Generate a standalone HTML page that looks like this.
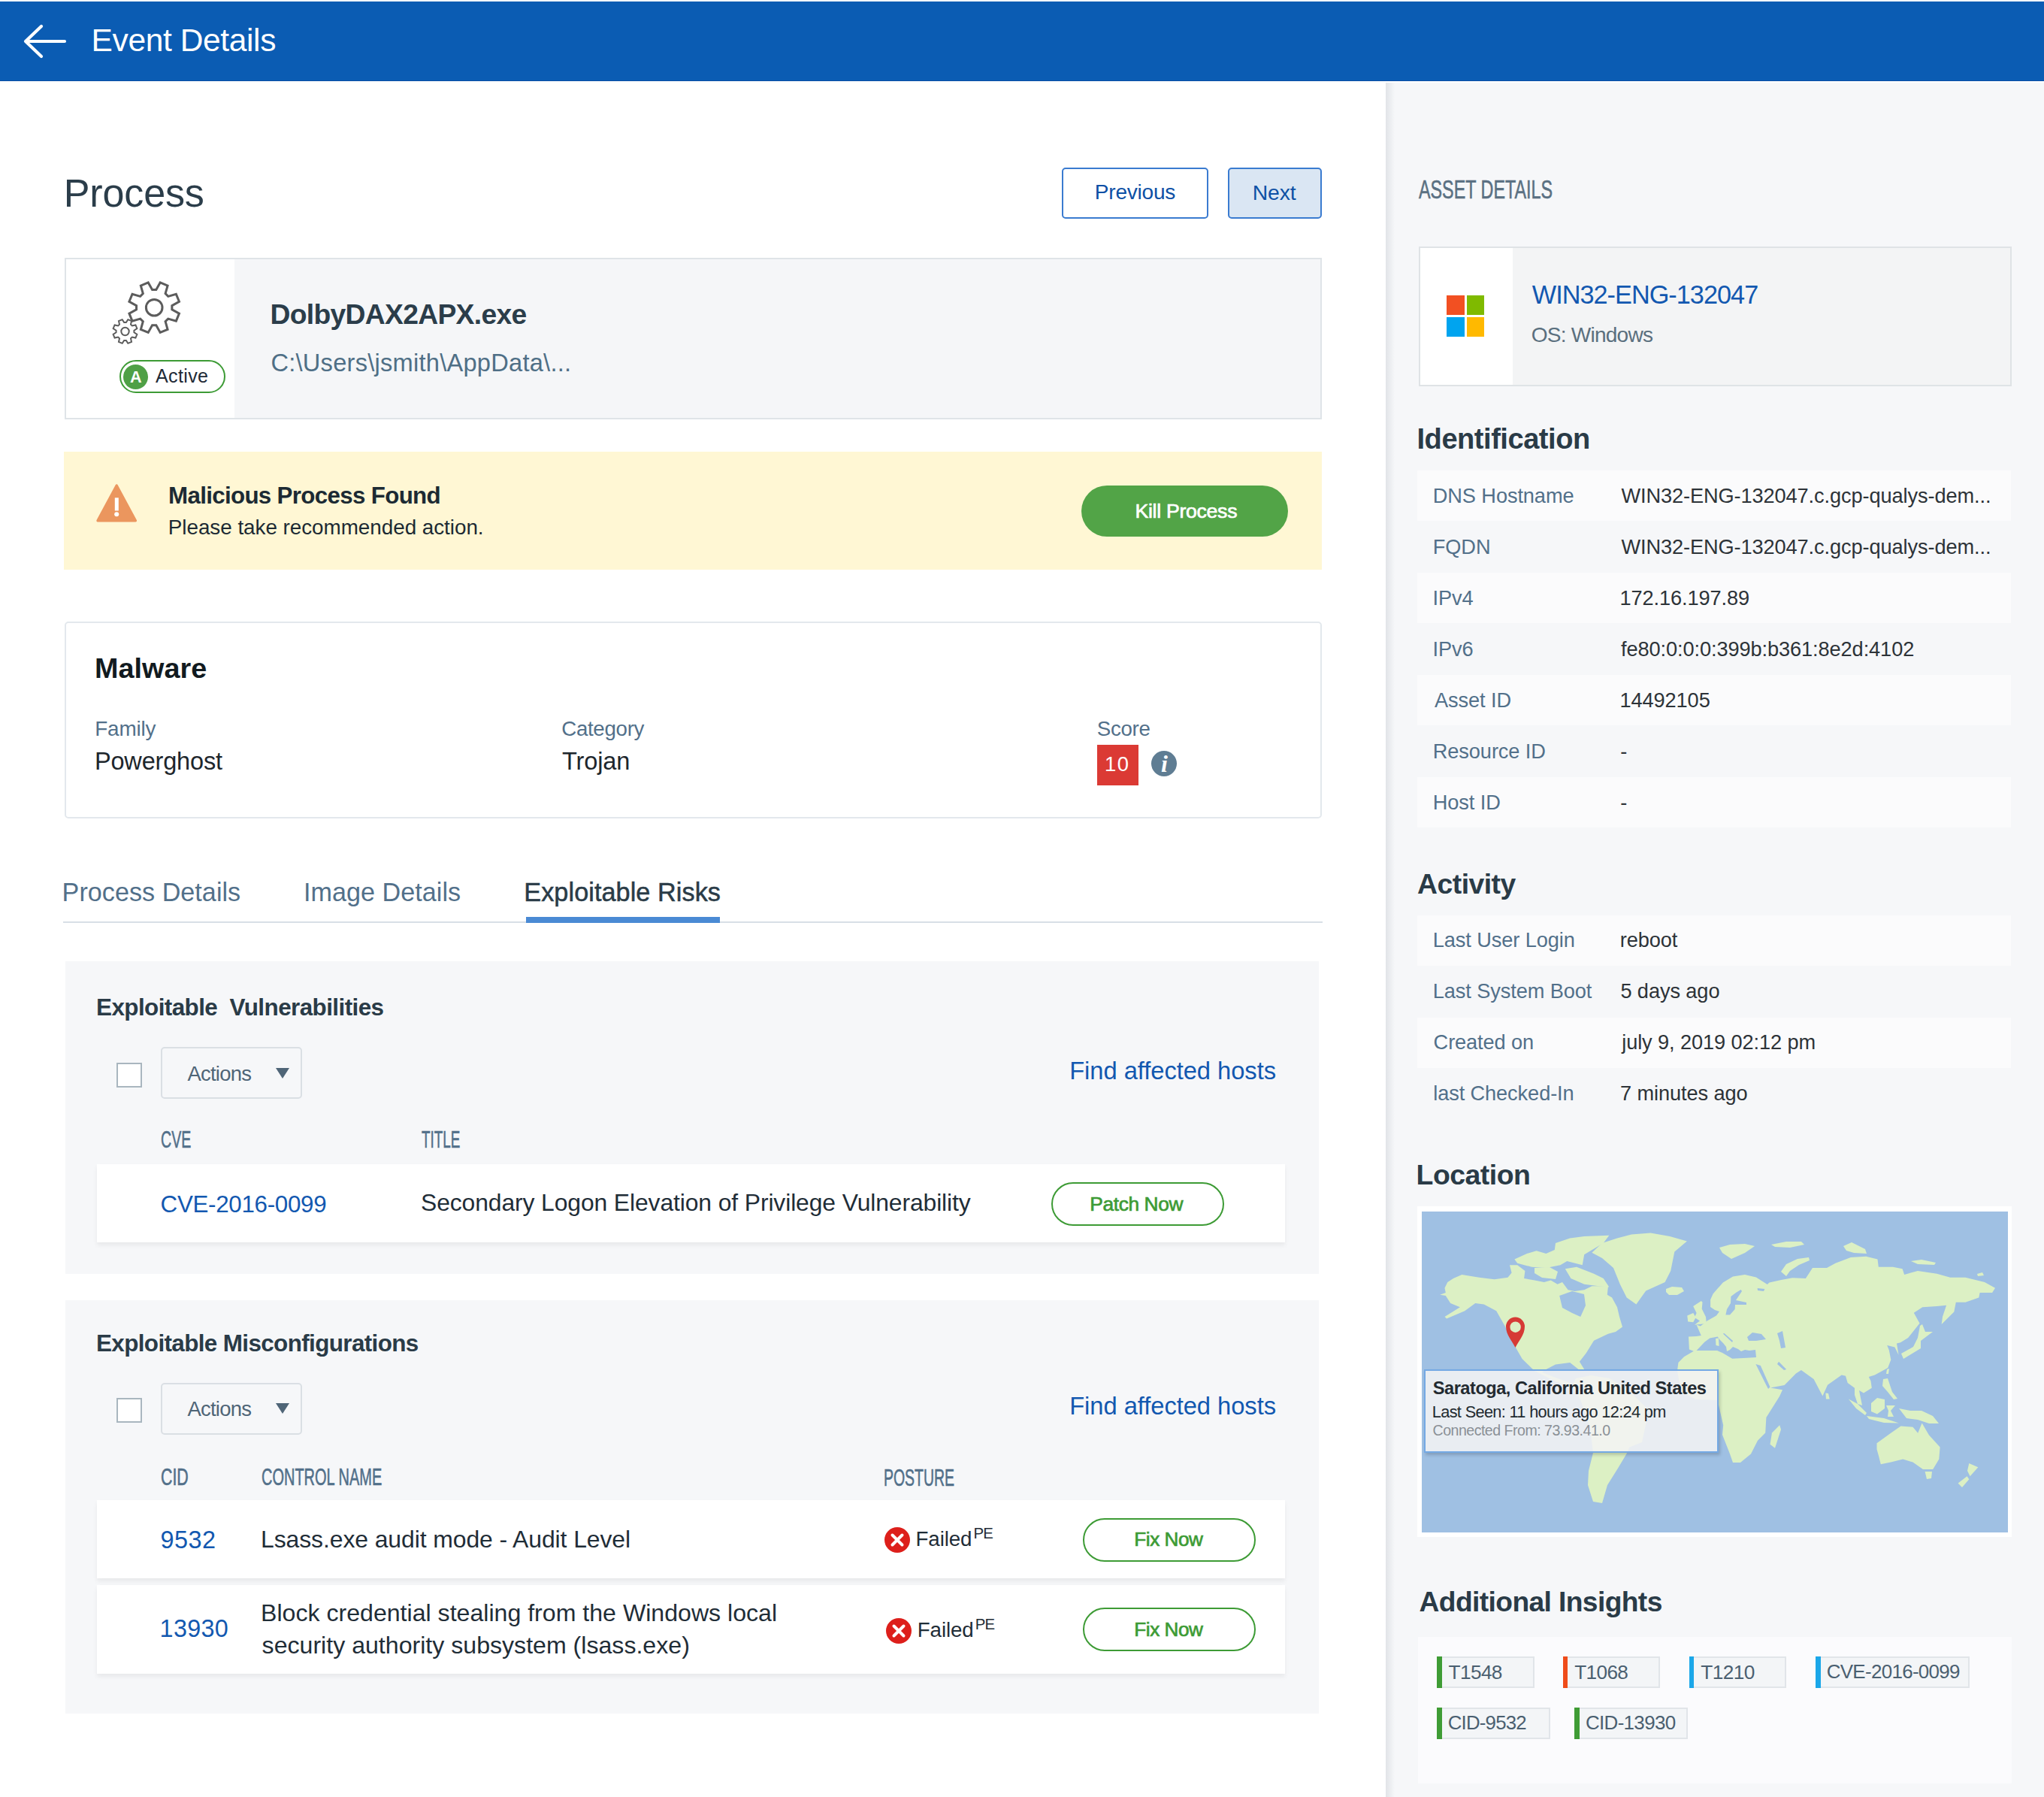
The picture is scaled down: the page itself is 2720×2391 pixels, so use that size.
<!DOCTYPE html>
<html><head><meta charset="utf-8"><title>Event Details</title>
<style>
html,body{margin:0;padding:0;}
body{width:2720px;height:2391px;position:relative;overflow:hidden;background:#fff;font-family:"Liberation Sans",sans-serif;}
.t{position:absolute;white-space:pre;line-height:1;}
.r{position:absolute;}
</style></head><body>
<div class="r" style="left:0.0px;top:1.8px;width:2720.0px;height:106.2px;background:#0b5cb3;border-bottom:1.5px solid #0a4ea6;box-sizing:border-box;"></div>
<svg class="r" style="left:0;top:0" width="140" height="108"><path d="M86,55 L34,55 M55,35 L34,55 L55,75" stroke="#fff" stroke-width="4.2" fill="none" stroke-linecap="round" stroke-linejoin="round"/></svg>
<div class="t" style="left:121.6px;top:32.5px;font-size:42.51px;font-weight:400;color:#ffffff;letter-spacing:-0.38px;">Event Details</div>
<div class="r" style="left:1844.0px;top:110.0px;width:876.0px;height:2281.0px;background:#f6f7f9;"></div>
<div class="r" style="left:1844.0px;top:110.0px;width:12.0px;height:2281.0px;background:linear-gradient(to right, rgba(40,60,80,0.10), rgba(40,60,80,0));"></div>
<div class="t" style="left:84.8px;top:230.9px;font-size:52.08px;font-weight:400;color:#2b3d4a;letter-spacing:-0.17px;">Process</div>
<div class="r" style="left:1413.0px;top:223.0px;width:195.0px;height:68.0px;border:2px solid #3a7bd0;border-radius:5px;background:#fff;box-sizing:border-box;"></div>
<div class="t" style="left:1456.8px;top:242.4px;font-size:28.06px;font-weight:400;color:#0d50a5;letter-spacing:-0.23px;">Previous</div>
<div class="r" style="left:1634.0px;top:223.0px;width:125.0px;height:68.0px;border:2px solid #3a7bd0;border-radius:5px;background:#dae6f3;box-sizing:border-box;"></div>
<div class="t" style="left:1666.7px;top:242.2px;font-size:28.36px;font-weight:400;color:#0d50a5;letter-spacing:-0.09px;">Next</div>
<div class="r" style="left:86.0px;top:343.0px;width:1673.0px;height:215.0px;border:2px solid #dfe4e8;background:#f5f6f8;box-sizing:border-box;"></div>
<div class="r" style="left:88.0px;top:345.0px;width:224.0px;height:211.0px;background:#fff;"></div>
<svg class="r" style="left:0;top:0" width="320" height="560"><path d="M213.18,375.94 L223.07,380.04 L220.08,390.63 L223.77,394.32 L234.36,391.33 L238.46,401.22 L228.86,406.59 L228.86,411.81 L238.46,417.18 L234.36,427.07 L223.77,424.08 L220.08,427.77 L223.07,438.36 L213.18,442.46 L207.81,432.86 L202.59,432.86 L197.22,442.46 L187.33,438.36 L190.32,427.77 L186.63,424.08 L176.04,427.07 L171.94,417.18 L181.54,411.81 L181.54,406.59 L171.94,401.22 L176.04,391.33 L186.63,394.32 L190.32,390.63 L187.33,380.04 L197.22,375.94 L202.59,385.54 L207.81,385.54 Z" stroke="#5c5c5c" stroke-width="3" fill="none" stroke-linejoin="miter"/><circle cx="205.2" cy="409.2" r="10.8" stroke="#5c5c5c" stroke-width="3" fill="none"/><path d="M170.31,425.15 L175.02,427.10 L174.00,431.63 L175.87,433.50 L180.40,432.48 L182.35,437.19 L178.43,439.68 L178.43,442.32 L182.35,444.81 L180.40,449.52 L175.87,448.50 L174.00,450.37 L175.02,454.90 L170.31,456.85 L167.82,452.93 L165.18,452.93 L162.69,456.85 L157.98,454.90 L159.00,450.37 L157.13,448.50 L152.60,449.52 L150.65,444.81 L154.57,442.32 L154.57,439.68 L150.65,437.19 L152.60,432.48 L157.13,433.50 L159.00,431.63 L157.98,427.10 L162.69,425.15 L165.18,429.07 L167.82,429.07 Z" stroke="#5c5c5c" stroke-width="2" fill="#fff"/><circle cx="166.5" cy="441" r="5.2" stroke="#5c5c5c" stroke-width="2" fill="none"/></svg>
<div class="r" style="left:159.0px;top:479.0px;width:141.0px;height:44.0px;border:2.5px solid #3d9b35;border-radius:22px;background:#fff;box-sizing:border-box;"></div>
<div class="r" style="left:163.5px;top:484.5px;width:33px;height:33px;border-radius:50%;background:#4fa046;"></div>
<div class="t" style="left:173.0px;top:490.7px;font-size:21.65px;font-weight:700;color:#fff;">A</div>
<div class="t" style="left:207.0px;top:488.3px;font-size:25.09px;font-weight:400;color:#1e2a36;letter-spacing:0.35px;">Active</div>
<div class="t" style="left:359.6px;top:400.4px;font-size:37.28px;font-weight:700;color:#2b3d4a;letter-spacing:-0.70px;">DolbyDAX2APX.exe</div>
<div class="t" style="left:360.4px;top:467.4px;font-size:32.64px;font-weight:400;color:#4f6f86;letter-spacing:0.24px;">C:\Users\jsmith\AppData\...</div>
<div class="r" style="left:85.0px;top:601.0px;width:1674.0px;height:157.0px;background:#fff7d4;"></div>
<svg class="r" style="left:100px;top:620px" width="120" height="100"><path d="M55.2,26 L30,72.8 L80.4,72.8 Z" fill="#eb965e" stroke="#eb965e" stroke-width="3.4" stroke-linejoin="round"/><rect x="52.8" y="42.3" width="5" height="17.2" fill="#fff"/><circle cx="55.2" cy="64.2" r="3" fill="#fff"/></svg>
<div class="t" style="left:224.0px;top:643.5px;font-size:31.30px;font-weight:700;color:#1c2a33;letter-spacing:-0.67px;">Malicious Process Found</div>
<div class="t" style="left:223.8px;top:688.2px;font-size:27.85px;font-weight:400;color:#1c2a33;letter-spacing:-0.04px;">Please take recommended action.</div>
<div class="r" style="left:1439.0px;top:646.0px;width:275.0px;height:68.0px;background:#52a447;border-radius:34px;"></div>
<div class="t" style="left:1510.5px;top:666.8px;font-size:26.70px;font-weight:400;color:#fff;letter-spacing:-0.31px;-webkit-text-stroke:0.7px #fff;">Kill Process</div>
<div class="r" style="left:86.0px;top:827.0px;width:1673.0px;height:262.0px;border:2px solid #e3e8ed;border-radius:5px;background:#fff;box-sizing:border-box;"></div>
<div class="t" style="left:126.0px;top:871.0px;font-size:37.75px;font-weight:700;color:#111a20;letter-spacing:0.03px;">Malware</div>
<div class="t" style="left:126.3px;top:956.1px;font-size:27.86px;font-weight:400;color:#52708a;letter-spacing:-0.20px;">Family</div>
<div class="t" style="left:125.9px;top:997.0px;font-size:32.53px;font-weight:400;color:#1d262c;letter-spacing:-0.17px;">Powerghost</div>
<div class="t" style="left:747.2px;top:956.3px;font-size:27.70px;font-weight:400;color:#52708a;letter-spacing:-0.30px;">Category</div>
<div class="t" style="left:747.9px;top:996.9px;font-size:32.59px;font-weight:400;color:#1d262c;letter-spacing:-0.12px;">Trojan</div>
<div class="t" style="left:1459.8px;top:955.5px;font-size:27.71px;font-weight:400;color:#52708a;letter-spacing:-0.32px;">Score</div>
<div class="r" style="left:1460.0px;top:990.5px;width:55.0px;height:54.5px;background:#db3a34;"></div>
<div class="t" style="left:1469.9px;top:1003.3px;font-size:27.42px;font-weight:400;color:#fff;letter-spacing:1.58px;">10</div>
<svg class="r" style="left:1520px;top:990px" width="60" height="60"><circle cx="29" cy="26" r="17" fill="#5f7d93"/><text x="29.5" y="36.5" text-anchor="middle" font-family="Liberation Serif" font-style="italic" font-weight="700" font-size="32" fill="#fff">i</text></svg>
<div class="r" style="left:84.0px;top:1225.5px;width:1676.0px;height:2.0px;background:#d8dfe6;"></div>
<div class="t" style="left:82.6px;top:1170.0px;font-size:34.15px;font-weight:400;color:#52708a;letter-spacing:0.03px;">Process Details</div>
<div class="t" style="left:403.9px;top:1170.0px;font-size:34.15px;font-weight:400;color:#52708a;letter-spacing:0.04px;">Image Details</div>
<div class="t" style="left:697.3px;top:1169.9px;font-size:34.22px;font-weight:400;color:#2a3b47;letter-spacing:0.07px;-webkit-text-stroke:0.5px #2a3b47;">Exploitable Risks</div>
<div class="r" style="left:700.0px;top:1219.6px;width:258.0px;height:8.2px;background:#4a8ad4;"></div>
<div class="r" style="left:87.0px;top:1279.4px;width:1668.0px;height:416.1px;background:#f6f7f9;"></div>
<div class="t" style="left:128.0px;top:1325.4px;font-size:31.43px;font-weight:700;color:#2a3b47;letter-spacing:-0.58px;">Exploitable  Vulnerabilities</div>
<div class="r" style="left:155.0px;top:1414.0px;width:34.0px;height:33.0px;border:2px solid #a9b6bf;background:#fff;box-sizing:border-box;"></div>
<div class="r" style="left:214.0px;top:1393.4px;width:188.0px;height:69.0px;border:2px solid #dadfe4;border-radius:5px;box-sizing:border-box;"></div>
<div class="t" style="left:249.5px;top:1414.7px;font-size:27.48px;font-weight:400;color:#4f6577;letter-spacing:-0.78px;">Actions</div>
<svg class="r" style="left:360px;top:1415px" width="30" height="25"><path d="M7,6 L25,6 L16,20 Z" fill="#4f6577"/></svg>
<div class="t" style="left:1423.2px;top:1408.9px;font-size:32.71px;font-weight:400;color:#1258b0;letter-spacing:-0.05px;">Find affected hosts</div>
<div class="t" style="left:214.2px;top:1502.2px;font-size:30.73px;font-weight:400;color:#52708a;transform:scaleX(0.6377);transform-origin:0 0;-webkit-text-stroke:0.6px #52708a;">CVE</div>
<div class="t" style="left:561.0px;top:1502.2px;font-size:30.73px;font-weight:400;color:#52708a;transform:scaleX(0.6142);transform-origin:0 0;-webkit-text-stroke:0.6px #52708a;">TITLE</div>
<div class="r" style="left:129.3px;top:1549.0px;width:1581.0px;height:104.0px;background:#fff;box-shadow:0 4px 6px rgba(0,0,0,0.06);"></div>
<div class="t" style="left:213.6px;top:1586.7px;font-size:31.33px;font-weight:400;color:#1258b0;letter-spacing:-0.30px;">CVE-2016-0099</div>
<div class="t" style="left:560.0px;top:1584.6px;font-size:31.87px;font-weight:400;color:#1f2d37;letter-spacing:-0.11px;">Secondary Logon Elevation of Privilege Vulnerability</div>
<div class="r" style="left:1398.6px;top:1572.6px;width:230.3px;height:58.9px;border:2.5px solid #3d9b35;border-radius:30px;box-sizing:border-box;"></div>
<div class="t" style="left:1450.3px;top:1589.0px;font-size:26.31px;font-weight:400;color:#3d9b35;letter-spacing:-0.38px;-webkit-text-stroke:0.7px #3d9b35;">Patch Now</div>
<div class="r" style="left:87.0px;top:1730.0px;width:1668.0px;height:550.0px;background:#f6f7f9;"></div>
<div class="t" style="left:128.0px;top:1771.6px;font-size:31.43px;font-weight:700;color:#2a3b47;letter-spacing:-0.63px;">Exploitable Misconfigurations</div>
<div class="r" style="left:155.4px;top:1859.6px;width:33.6px;height:33.7px;border:2px solid #a9b6bf;background:#fff;box-sizing:border-box;"></div>
<div class="r" style="left:214.4px;top:1839.5px;width:187.3px;height:69.0px;border:2px solid #dadfe4;border-radius:5px;box-sizing:border-box;"></div>
<div class="t" style="left:249.5px;top:1860.7px;font-size:27.48px;font-weight:400;color:#4f6577;letter-spacing:-0.78px;">Actions</div>
<svg class="r" style="left:360px;top:1861px" width="30" height="25"><path d="M7,6 L25,6 L16,20 Z" fill="#4f6577"/></svg>
<div class="t" style="left:1423.2px;top:1854.9px;font-size:32.71px;font-weight:400;color:#1258b0;letter-spacing:-0.05px;">Find affected hosts</div>
<div class="t" style="left:213.9px;top:1950.7px;font-size:30.73px;font-weight:400;color:#52708a;transform:scaleX(0.6950);transform-origin:0 0;-webkit-text-stroke:0.6px #52708a;">CID</div>
<div class="t" style="left:347.8px;top:1950.7px;font-size:30.73px;font-weight:400;color:#52708a;transform:scaleX(0.6505);transform-origin:0 0;-webkit-text-stroke:0.6px #52708a;">CONTROL NAME</div>
<div class="t" style="left:1176.1px;top:1951.5px;font-size:30.73px;font-weight:400;color:#52708a;transform:scaleX(0.6336);transform-origin:0 0;-webkit-text-stroke:0.6px #52708a;">POSTURE</div>
<div class="r" style="left:129.3px;top:1996.0px;width:1581.0px;height:103.5px;background:#fff;box-shadow:0 4px 6px rgba(0,0,0,0.06);"></div>
<div class="r" style="left:129.3px;top:2108.5px;width:1581.0px;height:118.0px;background:#fff;box-shadow:0 4px 6px rgba(0,0,0,0.06);"></div>
<div class="t" style="left:213.5px;top:2032.7px;font-size:32.45px;font-weight:400;color:#1258b0;letter-spacing:0.43px;">9532</div>
<div class="t" style="left:347.0px;top:2033.0px;font-size:31.93px;font-weight:400;color:#1f2d37;letter-spacing:-0.09px;">Lsass.exe audit mode - Audit Level</div>
<div class="t" style="left:212.6px;top:2151.2px;font-size:32.33px;font-weight:400;color:#1258b0;letter-spacing:0.32px;">13930</div>
<div class="t" style="left:347.0px;top:2130.1px;font-size:32.12px;font-weight:400;color:#1f2d37;">Block credential stealing from the Windows local</div>
<div class="t" style="left:348.6px;top:2172.6px;font-size:32.12px;font-weight:400;color:#1f2d37;">security authority subsystem (lsass.exe)</div>
<svg class="r" style="left:1174.0px;top:2028.5px" width="40" height="40"><circle cx="20" cy="20" r="17" fill="#dd1f1b"/><path d="M13.5,13.5 L26.5,26.5 M26.5,13.5 L13.5,26.5" stroke="#fff" stroke-width="4" stroke-linecap="round"/></svg>
<div class="t" style="left:1218.5px;top:2033.5px;font-size:27.73px;font-weight:400;color:#1f2d37;letter-spacing:-0.11px;">Failed</div>
<div class="t" style="left:1295.4px;top:2029.5px;font-size:20.39px;font-weight:400;color:#1f2d37;letter-spacing:-0.67px;">PE</div>
<svg class="r" style="left:1176.3px;top:2149.5px" width="40" height="40"><circle cx="20" cy="20" r="17" fill="#dd1f1b"/><path d="M13.5,13.5 L26.5,26.5 M26.5,13.5 L13.5,26.5" stroke="#fff" stroke-width="4" stroke-linecap="round"/></svg>
<div class="t" style="left:1220.8px;top:2154.5px;font-size:27.73px;font-weight:400;color:#1f2d37;letter-spacing:-0.11px;">Failed</div>
<div class="t" style="left:1297.7px;top:2150.5px;font-size:20.39px;font-weight:400;color:#1f2d37;letter-spacing:-0.67px;">PE</div>
<div class="r" style="left:1441.2px;top:2019.6px;width:230.3px;height:58.2px;border:2.5px solid #3d9b35;border-radius:30px;box-sizing:border-box;"></div>
<div class="t" style="left:1509.3px;top:2035.4px;font-size:26.15px;font-weight:400;color:#3d9b35;letter-spacing:-0.47px;-webkit-text-stroke:0.7px #3d9b35;">Fix Now</div>
<div class="r" style="left:1441.2px;top:2139.0px;width:230.3px;height:58.0px;border:2.5px solid #3d9b35;border-radius:30px;box-sizing:border-box;"></div>
<div class="t" style="left:1509.3px;top:2154.8px;font-size:26.15px;font-weight:400;color:#3d9b35;letter-spacing:-0.47px;-webkit-text-stroke:0.7px #3d9b35;">Fix Now</div>
<div class="t" style="left:1888.0px;top:235.4px;font-size:35.61px;font-weight:400;color:#5a7082;transform:scaleX(0.6552);transform-origin:0 0;-webkit-text-stroke:0.6px #5a7082;">ASSET DETAILS</div>
<div class="r" style="left:1888.0px;top:328.0px;width:789.0px;height:186.0px;border:2px solid #dfe3e6;background:#f3f4f5;box-sizing:border-box;"></div>
<div class="r" style="left:1890.0px;top:330.0px;width:123.0px;height:182.0px;background:#fff;"></div>
<div class="r" style="left:1925.0px;top:393.0px;width:24.0px;height:26.0px;background:#f25022;"></div>
<div class="r" style="left:1951.5px;top:393.0px;width:23.5px;height:26.0px;background:#7fba00;"></div>
<div class="r" style="left:1925.0px;top:422.0px;width:24.0px;height:26.0px;background:#00a4ef;"></div>
<div class="r" style="left:1951.5px;top:422.0px;width:23.5px;height:26.0px;background:#ffb900;"></div>
<div class="t" style="left:2038.8px;top:374.5px;font-size:34.28px;font-weight:400;color:#1258b0;letter-spacing:-0.98px;">WIN32-ENG-132047</div>
<div class="t" style="left:2037.7px;top:432.3px;font-size:28.05px;font-weight:400;color:#5a6f7e;letter-spacing:-0.76px;">OS: Windows</div>
<div class="t" style="left:1885.5px;top:564.8px;font-size:38.09px;font-weight:700;color:#2a3b47;letter-spacing:-0.48px;">Identification</div>
<div class="r" style="left:1886.0px;top:626.0px;width:790.0px;height:67.0px;background:#fbfbfc;"></div>
<div class="t" style="left:1906.8px;top:645.6px;font-size:27.20px;font-weight:400;color:#52708a;letter-spacing:-0.10px;">DNS Hostname</div>
<div class="t" style="left:2157.4px;top:645.6px;font-size:27.20px;font-weight:400;color:#2d3338;letter-spacing:-0.10px;">WIN32-ENG-132047.c.gcp-qualys-dem...</div>
<div class="t" style="left:1906.8px;top:713.6px;font-size:27.20px;font-weight:400;color:#52708a;letter-spacing:-0.10px;">FQDN</div>
<div class="t" style="left:2157.4px;top:713.6px;font-size:27.20px;font-weight:400;color:#2d3338;letter-spacing:-0.10px;">WIN32-ENG-132047.c.gcp-qualys-dem...</div>
<div class="r" style="left:1886.0px;top:762.0px;width:790.0px;height:67.0px;background:#fbfbfc;"></div>
<div class="t" style="left:1906.6px;top:781.6px;font-size:27.20px;font-weight:400;color:#52708a;letter-spacing:-0.10px;">IPv4</div>
<div class="t" style="left:2155.5px;top:781.6px;font-size:27.20px;font-weight:400;color:#2d3338;letter-spacing:-0.10px;">172.16.197.89</div>
<div class="t" style="left:1906.6px;top:849.6px;font-size:27.20px;font-weight:400;color:#52708a;letter-spacing:-0.10px;">IPv6</div>
<div class="t" style="left:2157.1px;top:849.6px;font-size:27.20px;font-weight:400;color:#2d3338;letter-spacing:-0.10px;">fe80:0:0:0:399b:b361:8e2d:4102</div>
<div class="r" style="left:1886.0px;top:898.0px;width:790.0px;height:67.0px;background:#fbfbfc;"></div>
<div class="t" style="left:1909.0px;top:917.6px;font-size:27.20px;font-weight:400;color:#52708a;letter-spacing:-0.10px;">Asset ID</div>
<div class="t" style="left:2155.5px;top:917.6px;font-size:27.20px;font-weight:400;color:#2d3338;letter-spacing:-0.10px;">14492105</div>
<div class="t" style="left:1906.8px;top:985.6px;font-size:27.20px;font-weight:400;color:#52708a;letter-spacing:-0.10px;">Resource ID</div>
<div class="t" style="left:2156.3px;top:985.6px;font-size:27.20px;font-weight:400;color:#2d3338;letter-spacing:-0.10px;">-</div>
<div class="r" style="left:1886.0px;top:1034.0px;width:790.0px;height:67.0px;background:#fbfbfc;"></div>
<div class="t" style="left:1906.8px;top:1053.6px;font-size:27.20px;font-weight:400;color:#52708a;letter-spacing:-0.10px;">Host ID</div>
<div class="t" style="left:2156.3px;top:1053.6px;font-size:27.20px;font-weight:400;color:#2d3338;letter-spacing:-0.10px;">-</div>
<div class="t" style="left:1886.1px;top:1157.8px;font-size:37.29px;font-weight:700;color:#2a3b47;letter-spacing:-0.50px;">Activity</div>
<div class="r" style="left:1886.0px;top:1217.6px;width:790.0px;height:67.0px;background:#fbfbfc;"></div>
<div class="t" style="left:1906.8px;top:1237.2px;font-size:27.20px;font-weight:400;color:#52708a;letter-spacing:-0.10px;">Last User Login</div>
<div class="t" style="left:2155.7px;top:1237.2px;font-size:27.20px;font-weight:400;color:#2d3338;letter-spacing:-0.10px;">reboot</div>
<div class="t" style="left:1906.8px;top:1305.2px;font-size:27.20px;font-weight:400;color:#52708a;letter-spacing:-0.10px;">Last System Boot</div>
<div class="t" style="left:2156.4px;top:1305.2px;font-size:27.20px;font-weight:400;color:#2d3338;letter-spacing:-0.10px;">5 days ago</div>
<div class="r" style="left:1886.0px;top:1353.6px;width:790.0px;height:67.0px;background:#fbfbfc;"></div>
<div class="t" style="left:1907.6px;top:1373.2px;font-size:27.20px;font-weight:400;color:#52708a;letter-spacing:-0.10px;">Created on</div>
<div class="t" style="left:2158.2px;top:1373.2px;font-size:27.20px;font-weight:400;color:#2d3338;letter-spacing:-0.10px;">july 9, 2019 02:12 pm</div>
<div class="t" style="left:1907.2px;top:1441.2px;font-size:27.20px;font-weight:400;color:#52708a;letter-spacing:-0.10px;">last Checked-In</div>
<div class="t" style="left:2156.1px;top:1441.2px;font-size:27.20px;font-weight:400;color:#2d3338;letter-spacing:-0.10px;">7 minutes ago</div>
<div class="t" style="left:1884.6px;top:1544.8px;font-size:37.40px;font-weight:700;color:#2a3b47;letter-spacing:-0.50px;">Location</div>
<div class="r" style="left:1886.0px;top:1605.0px;width:791.0px;height:440.0px;background:#fff;"></div>
<svg class="r" style="left:1892px;top:1612px" width="780" height="427" viewBox="0 0 780 427"><rect width="780" height="427" fill="#9fc0e3"/><g id="land" fill="#dcf0c4"><path d="M24.2,110.7 L31.8,108.1 L30.5,101.8 L34.3,94.1 L42.0,89.0 L53.4,84.0 L76.3,87.8 L96.7,90.3 L114.5,87.8 L119.6,81.4 L117.0,71.2 L127.2,71.2 L137.4,78.9 L136.1,89.0 L150.1,91.6 L162.8,94.1 L171.7,91.6 L180.6,96.7 L187.0,94.1 L194.6,104.3 L203.5,106.0 L216.2,104.3 L226.4,99.2 L248.0,99.2 L246.8,110.7 L253.1,114.5 L260.0,127.2 L263.0,140.0 L267.0,153.5 L258.0,160.0 L248.0,162.8 L229.0,171.7 L218.8,188.3 L209.9,199.7 L216.2,210.0 L208.6,210.0 L197.2,201.0 L178.0,203.5 L165.4,210.0 L160.0,214.0 L178.0,221.0 L200.0,229.0 L205.0,233.0 L198.0,235.0 L178.0,226.0 L150.0,212.0 L133.6,195.9 L124.7,180.6 L110.7,152.6 L99.2,132.3 L82.7,123.4 L71.2,122.1 L57.2,132.3 L33.1,142.5 L30.5,140.0 L50.9,127.2 L38.2,122.1 L31.8,112.0Z"/><path d="M123.4,63.6 L139.9,56.0 L152.6,52.2 L165.4,56.0 L176.8,50.9 L178.0,42.0 L197.2,35.6 L216.2,33.1 L249.3,31.8 L241.7,42.0 L216.2,57.2 L213.7,71.2 L193.3,66.1 L184.4,71.2 L165.4,75.0 L146.3,73.8 L127.2,68.7Z"/><path d="M190.8,76.3 L206.0,73.8 L229.0,82.7 L241.7,89.0 L249.3,100.5 L235.3,99.2 L216.2,96.7 L198.4,89.0Z"/><path d="M150.0,75.0 L170.0,74.0 L181.0,80.0 L178.0,90.0 L160.0,88.0 L150.0,82.0Z"/><path d="M226.4,54.7 L240.0,42.0 L260.0,35.6 L279.0,30.5 L304.5,28.6 L330.0,33.0 L352.9,39.4 L336.3,53.4 L331.2,78.9 L323.6,94.1 L298.2,105.6 L285.4,123.4 L272.7,114.5 L263.8,96.7 L255.0,75.0 L240.0,62.0Z"/><path d="M325.0,103.0 L333.0,100.0 L346.0,101.0 L349.0,106.0 L340.0,111.0 L329.0,111.0 L325.0,107.0Z"/><path d="M371.8,119.1 L361.2,126.1 L365.6,134.9 L363.0,141.1 L370.0,145.5 L363.0,150.8 L378.8,149.0 L378.0,140.2 L372.7,129.6 L373.5,120.8Z"/><path d="M353.3,138.4 L361.2,134.9 L364.7,141.1 L361.2,147.3 L354.2,146.4Z"/><path d="M396.0,48.0 L410.0,44.0 L430.0,43.0 L443.0,46.0 L430.0,55.0 L412.0,63.0 L400.0,55.0Z"/><path d="M465.0,44.0 L485.0,40.0 L505.0,40.0 L509.0,44.0 L490.0,48.0 L470.0,47.0Z"/><path d="M478.0,80.0 L485.0,70.0 L500.0,63.0 L515.0,61.0 L516.0,65.0 L502.0,71.0 L490.0,79.0 L485.0,86.0Z"/><path d="M561.0,46.0 L572.0,41.0 L590.0,50.0 L592.0,56.0 L575.0,55.0 L565.0,52.0Z"/><path d="M651.0,66.0 L665.0,64.0 L684.0,68.0 L682.0,71.0 L660.0,70.0Z"/><path d="M739.0,83.0 L746.0,81.0 L748.0,85.0 L740.0,86.0Z"/><path d="M205.0,222.0 L225.0,218.0 L250.0,222.0 L275.0,238.0 L300.0,262.0 L299.0,279.0 L293.0,307.0 L276.5,313.6 L272.7,322.0 L262.0,340.0 L247.0,364.0 L240.0,388.0 L228.0,386.0 L221.0,364.0 L222.0,345.0 L228.0,321.0 L224.0,288.0 L211.0,250.0 L200.0,232.0Z"/><path d="M355.9,183.4 L355.0,166.6 L365.6,166.0 L371.8,164.9 L365.6,150.8 L370.9,152.5 L379.7,145.5 L392.0,138.4 L396.0,133.0 L390.0,131.0 L384.1,127.0 L384.1,117.3 L387.6,109.4 L400.8,94.4 L414.0,86.5 L429.9,83.9 L444.9,87.4 L459.8,97.1 L462.5,94.4 L478.3,90.9 L493.3,88.3 L510.9,89.1 L520.0,75.0 L539.0,75.0 L550.5,68.7 L570.9,61.0 L591.2,59.8 L606.5,63.6 L607.8,73.8 L626.9,73.8 L639.6,76.3 L642.1,84.0 L660.0,78.9 L685.4,82.7 L703.2,87.8 L723.5,87.8 L749.0,94.1 L763.0,101.8 L759.1,108.1 L742.6,108.1 L741.3,114.5 L723.5,120.8 L710.8,120.8 L708.3,133.6 L691.7,150.1 L693.0,140.0 L698.1,124.7 L685.4,125.9 L666.3,127.2 L654.8,134.8 L662.5,148.8 L647.2,167.9 L637.0,174.3 L632.0,175.5 L634.5,190.8 L629.4,180.6 L619.2,178.0 L621.8,184.4 L624.3,197.2 L620.2,208.0 L602.8,217.4 L594.8,220.0 L597.5,225.4 L598.8,234.7 L588.0,241.4 L582.0,238.0 L586.0,258.0 L580.0,256.0 L576.0,244.0 L576.0,234.7 L566.7,228.0 L564.0,218.7 L558.7,217.4 L540.0,230.7 L533.4,245.4 L521.6,223.0 L504.9,211.0 L497.9,215.6 L482.6,231.0 L464.0,234.5 L480.0,237.3 L476.0,246.0 L458.4,274.0 L457.2,294.5 L447.0,304.7 L438.0,322.5 L424.0,334.0 L414.0,334.0 L410.0,322.5 L400.0,297.0 L401.2,284.3 L397.4,267.8 L393.6,251.0 L365.0,250.0 L345.0,240.0 L340.0,212.0 L341.4,201.0 L349.0,193.3 L361.8,185.7Z"/><path d="M391.0,169.0 L395.0,168.4 L395.6,179.0 L391.5,178.0Z"/><path d="M666.0,150.0 L670.0,160.0 L680.0,160.0 L664.0,172.0 L664.0,182.0 L641.0,196.0 L638.0,189.0 L654.0,180.0 L660.0,168.0 L663.0,152.0Z"/><path d="M619.0,210.0 L622.0,209.0 L621.0,216.0 L618.0,216.0Z"/><path d="M614.0,223.0 L620.0,222.0 L626.0,240.0 L633.0,249.0 L628.0,250.0 L620.0,240.0 L613.0,232.0Z"/><path d="M598.0,255.0 L606.0,248.0 L616.0,250.0 L616.0,262.0 L606.0,269.5 L598.0,266.0Z"/><path d="M618.0,258.0 L630.0,258.0 L624.0,265.0 L628.0,273.0 L620.0,273.0 L621.0,265.0Z"/><path d="M568.0,249.4 L580.0,256.0 L592.0,268.0 L590.0,271.0 L578.0,262.0Z"/><path d="M592.0,272.0 L615.0,275.0 L634.8,281.5 L615.0,281.0 L595.0,276.0Z"/><path d="M635.0,262.0 L650.0,265.0 L665.0,265.0 L680.0,272.0 L688.0,282.0 L675.0,282.0 L660.0,277.0 L645.0,275.0Z"/><path d="M605.5,308.2 L624.2,294.8 L637.5,285.5 L653.5,286.8 L660.2,294.8 L665.6,281.5 L675.0,297.5 L689.6,313.5 L688.3,329.5 L680.2,343.0 L666.9,343.0 L653.5,333.6 L640.2,329.5 L624.2,333.6 L610.8,336.2 L608.1,325.5 L605.5,316.2Z"/><path d="M669.6,346.0 L679.0,346.0 L678.0,355.0 L672.0,356.0Z"/><path d="M728.3,334.9 L740.3,340.2 L729.6,352.3 L726.0,345.0Z"/><path d="M725.6,352.3 L728.3,356.3 L719.0,367.0 L713.6,361.6Z"/><path d="M476.2,284.3 L478.0,290.0 L470.0,314.8 L463.5,309.8 L466.0,294.5Z"/><path d="M537.4,241.4 L541.0,242.0 L542.7,249.4 L538.0,249.4Z"/><g fill="#9fc0e3"><path d="M183.2,112.0 L200.0,106.0 L216.0,110.0 L218.0,125.0 L211.2,140.0 L200.0,135.0 L187.0,128.0Z"/><path d="M365.6,185.1 L376.2,173.7 L383.2,168.4 L393.8,166.6 L396.0,170.0 L401.0,175.0 L405.0,180.0 L406.0,186.0 L410.0,184.0 L414.0,180.0 L421.0,183.0 L425.0,186.0 L430.0,184.0 L436.0,185.0 L444.0,184.0 L445.0,193.9 L432.5,194.8 L413.2,195.7 L400.0,188.0 L393.0,185.0 L361.2,185.1Z"/><path d="M433.0,167.0 L440.0,161.0 L452.0,163.0 L458.0,170.0 L445.0,172.0 L435.0,172.0Z"/><path d="M473.0,162.0 L480.0,159.0 L482.0,170.0 L484.0,181.0 L478.0,182.0 L476.0,172.0Z"/><path d="M424.6,104.1 L426.0,106.0 L418.0,118.0 L432.0,121.0 L432.0,124.0 L417.0,124.0 L416.7,130.0 L410.0,137.6 L404.4,137.6 L406.0,130.0 L411.0,122.0 L411.4,113.0 L418.0,108.0Z"/><path d="M446.6,102.0 L456.3,103.0 L455.0,106.0 L447.0,105.0Z"/><path d="M444.4,203.0 L450.8,205.0 L463.5,233.4 L461.0,236.0 L458.4,231.0Z"/><path d="M400.8,162.5 L402.5,162.0 L414.0,172.0 L413.0,174.0Z"/><path d="M475.0,199.7 L485.2,210.0 L482.0,211.0 L473.0,203.0Z"/></g><path d="M391.0,169.0 L395.0,168.4 L395.6,179.0 L391.5,178.0Z"/></g></svg>
<svg class="r" style="left:2000px;top:1748px" width="34" height="48"><path d="M16.5,45 C12,36 4,28 4,17 A12.5,12.5 0 0 1 29,17 C29,28 21,36 16.5,45 Z" fill="#d63a35"/><circle cx="16.6" cy="17.7" r="7.2" fill="#dcf0c4"/></svg>
<div class="r" style="left:1894.5px;top:1822.0px;width:392.5px;height:110.6px;background:rgba(244,244,244,0.87);border:2.5px solid #74a9e4;box-sizing:border-box;box-shadow:2px 3px 4px rgba(0,0,0,0.18);"></div>
<div class="t" style="left:1906.8px;top:1836.4px;font-size:23.59px;font-weight:700;color:#222a30;letter-spacing:-0.48px;">Saratoga, California United States</div>
<div class="t" style="left:1905.8px;top:1867.6px;font-size:21.72px;font-weight:400;color:#222a30;letter-spacing:-0.65px;">Last Seen: 11 hours ago 12:24 pm</div>
<div class="t" style="left:1906.5px;top:1894.4px;font-size:19.56px;font-weight:400;color:#8a9096;letter-spacing:-0.49px;">Connected From: 73.93.41.0</div>
<div class="t" style="left:1888.6px;top:2113.3px;font-size:37.19px;font-weight:700;color:#2a3b47;letter-spacing:-0.60px;">Additional Insights</div>
<div class="r" style="left:1887.0px;top:2178.0px;width:790.0px;height:195.0px;background:#fbfbfd;"></div>
<div class="r" style="left:1912.0px;top:2204.0px;width:129.5px;height:42.4px;background:#f3f5f7;border:2px solid #e1e5e9;border-left:none;box-sizing:border-box;"></div>
<div class="r" style="left:1912.0px;top:2204.0px;width:6.5px;height:42.4px;background:#3f9c35;"></div>
<div class="t" style="left:1927.5px;top:2212.2px;font-size:26.23px;font-weight:400;color:#4a5f70;letter-spacing:-0.60px;">T1548</div>
<div class="r" style="left:2079.8px;top:2204.0px;width:129.6px;height:42.4px;background:#f3f5f7;border:2px solid #e1e5e9;border-left:none;box-sizing:border-box;"></div>
<div class="r" style="left:2079.8px;top:2204.0px;width:6.5px;height:42.4px;background:#ef4c1a;"></div>
<div class="t" style="left:2095.3px;top:2212.3px;font-size:26.16px;font-weight:400;color:#4a5f70;letter-spacing:-0.65px;">T1068</div>
<div class="r" style="left:2247.7px;top:2204.0px;width:129.6px;height:42.4px;background:#f3f5f7;border:2px solid #e1e5e9;border-left:none;box-sizing:border-box;"></div>
<div class="r" style="left:2247.7px;top:2204.0px;width:6.5px;height:42.4px;background:#1ba7e9;"></div>
<div class="t" style="left:2263.2px;top:2212.2px;font-size:26.26px;font-weight:400;color:#4a5f70;letter-spacing:-0.58px;">T1210</div>
<div class="r" style="left:2416.0px;top:2204.0px;width:205.4px;height:42.4px;background:#f3f5f7;border:2px solid #e1e5e9;border-left:none;box-sizing:border-box;"></div>
<div class="r" style="left:2416.0px;top:2204.0px;width:6.5px;height:42.4px;background:#1ba7e9;"></div>
<div class="t" style="left:2430.7px;top:2212.4px;font-size:25.94px;font-weight:400;color:#4a5f70;letter-spacing:-0.68px;">CVE-2016-0099</div>
<div class="r" style="left:1912.0px;top:2271.8px;width:150.6px;height:42.4px;background:#f3f5f7;border:2px solid #e1e5e9;border-left:none;box-sizing:border-box;"></div>
<div class="r" style="left:1912.0px;top:2271.8px;width:6.5px;height:42.4px;background:#3f9c35;"></div>
<div class="t" style="left:1926.7px;top:2280.4px;font-size:25.80px;font-weight:400;color:#4a5f70;letter-spacing:-0.78px;">CID-9532</div>
<div class="r" style="left:2095.3px;top:2271.8px;width:150.3px;height:42.4px;background:#f3f5f7;border:2px solid #e1e5e9;border-left:none;box-sizing:border-box;"></div>
<div class="r" style="left:2095.3px;top:2271.8px;width:6.5px;height:42.4px;background:#3f9c35;"></div>
<div class="t" style="left:2110.0px;top:2280.2px;font-size:25.96px;font-weight:400;color:#4a5f70;letter-spacing:-0.68px;">CID-13930</div>
</body></html>
